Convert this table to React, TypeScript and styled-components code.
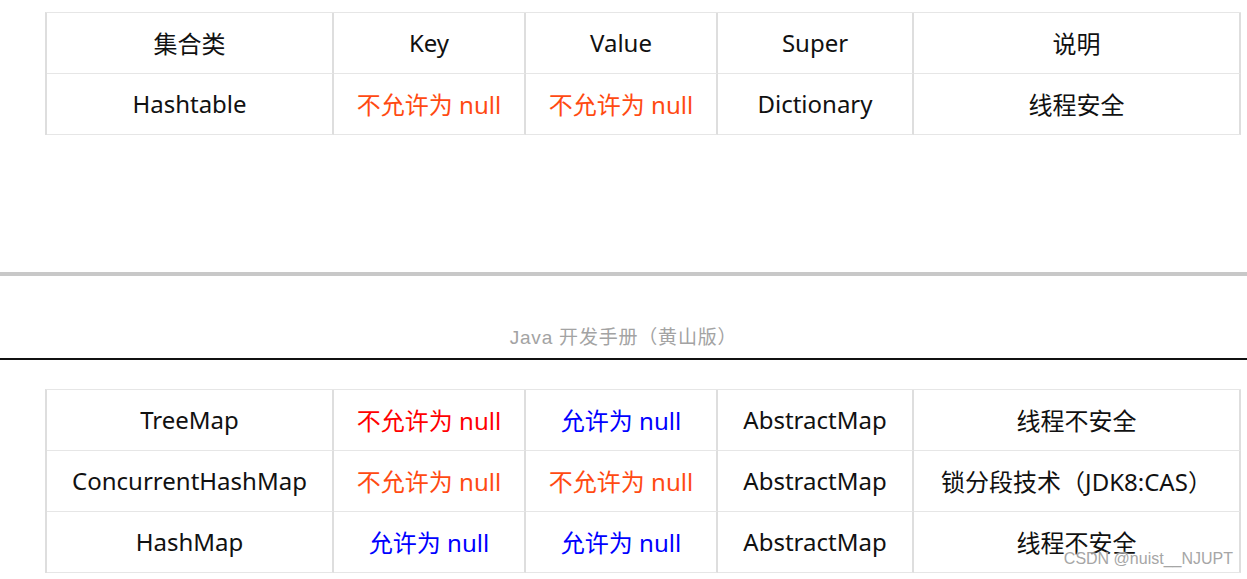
import React from "react";
import styled, { createGlobalStyle } from "styled-components";

const Global = createGlobalStyle`
  html, body { margin: 0; padding: 0; background: #fff; }
  body { font-family: "Noto Sans", "Noto Sans CJK SC", sans-serif; }
`;

const Page = styled.div`
  position: relative;
  width: 1247px;
  height: 579px;
  overflow: hidden;
  padding-top: 12px;
  box-sizing: border-box;
`;

const Grid = styled.div`
  display: grid;
  grid-template-columns: 287px 192px 192px 196px 327px;
  margin-left: 45px;
  width: 1196px;
  box-sizing: border-box;
  border-left: 2px solid #dedede;
  border-top: 1px solid #e6e6e6;
`;

type Tone = "black" | "orange" | "red" | "blue";
const toneColor: Record<Tone, string> = {
  black: "#111",
  orange: "#ff4a12",
  red: "#ff0000",
  blue: "#0000ff",
};

const Cell = styled.div<{ $tone: Tone }>`
  box-sizing: border-box;
  height: 61px;
  padding-bottom: 1px;
  border-right: 2px solid #dedede;
  border-bottom: 1px solid #e6e6e6;
  display: flex;
  align-items: center;
  justify-content: center;
  font-family: "Noto Sans", "Noto Sans CJK SC", sans-serif;
  font-size: 24px;
  color: ${(p) => toneColor[p.$tone]};
  white-space: nowrap;
`;

const GrayRule = styled.div`
  margin-top: 137px;
  height: 4px;
  background: #c8c8c8;
`;

const Caption = styled.div`
  margin-top: 50px;
  height: 24px;
  line-height: 24px;
  text-align: center;
  font-family: "Liberation Sans", "Noto Sans CJK SC", sans-serif;
  font-size: 19px;
  letter-spacing: 0.8px;
  color: #a3a3a3;
`;

const DarkRule = styled.div`
  margin-top: 8px;
  height: 2px;
  background: #111;
`;

const Spacer = styled.div`
  height: 29px;
`;

const Watermark = styled.div`
  position: absolute;
  right: 14px;
  top: 549px;
  font-family: "Liberation Sans", sans-serif;
  font-size: 16px;
  line-height: 20px;
  color: #a6a6a6;
  text-shadow: 0 0 2px #fff;
`;

type Row = [string, Tone][];

const head: Row = [
  ["集合类", "black"],
  ["Key", "black"],
  ["Value", "black"],
  ["Super", "black"],
  ["说明", "black"],
];

const topRows: Row[] = [
  head,
  [
    ["Hashtable", "black"],
    ["不允许为 null", "orange"],
    ["不允许为 null", "orange"],
    ["Dictionary", "black"],
    ["线程安全", "black"],
  ],
];

const bottomRows: Row[] = [
  [
    ["TreeMap", "black"],
    ["不允许为 null", "red"],
    ["允许为 null", "blue"],
    ["AbstractMap", "black"],
    ["线程不安全", "black"],
  ],
  [
    ["ConcurrentHashMap", "black"],
    ["不允许为 null", "orange"],
    ["不允许为 null", "orange"],
    ["AbstractMap", "black"],
    ["锁分段技术（JDK8:CAS）", "black"],
  ],
  [
    ["HashMap", "black"],
    ["允许为 null", "blue"],
    ["允许为 null", "blue"],
    ["AbstractMap", "black"],
    ["线程不安全", "black"],
  ],
];

const Table = ({ rows }: { rows: Row[] }) => (
  <Grid>
    {rows.map((r, i) =>
      r.map(([t, tone], j) => (
        <Cell key={`${i}-${j}`} $tone={tone}>
          {t}
        </Cell>
      ))
    )}
  </Grid>
);

export default function App() {
  return (
    <>
      <Global />
      <Page>
        <Table rows={topRows} />
        <GrayRule />
        <Caption>Java 开发手册（黄山版）</Caption>
        <DarkRule />
        <Spacer />
        <Table rows={bottomRows} />
        <Watermark>CSDN @nuist__NJUPT</Watermark>
      </Page>
    </>
  );
}
